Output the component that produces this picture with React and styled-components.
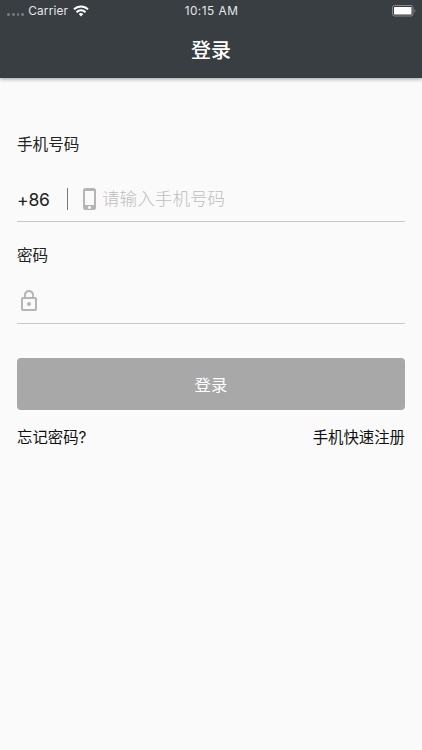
import { useState } from 'react'
import styled, { createGlobalStyle } from 'styled-components'
import { MdPhoneIphone, MdLockOutline } from 'react-icons/md'

const GlobalStyle = createGlobalStyle`
    *{
        box-sizing:border-box;
    }
    body{
        margin:0;
        background-color:#fafafa;
        font-family:Inter, "Noto Sans CJK SC", sans-serif;
    }
`
const Screen = styled.div`
    min-height:750px;
    background-color:#fafafa;
    color:#222;
`
const Header = styled.header`
    height:78px;
    background-color:#393e42;
    color:#fff;
    box-shadow:0 1px 4px rgba(0,0,0,0.4);
`
const StatusBar = styled.div`
    display:grid;
    grid-template-columns:1fr auto 1fr;
    align-items:center;
    height:20px;
    padding:0 6px 0 7px;
    font-size:11.8px;
    line-height:20px;
    letter-spacing:0.2px;
    color:#e6e8e9;
`
const Network = styled.div`
    display:flex;
    align-items:center;
    & svg{
        margin-left:5px;
    }
`
const Dots = styled.span`
    display:flex;
    gap:2px;
    padding-top:8px;
    margin-right:4px;
    & i{
        width:2.8px;
        height:2.6px;
        border-radius:50%;
        background-color:#74797d;
    }
`
const Time = styled.span`
    padding-top:1px;
    letter-spacing:0.5px;
`
const Battery = styled.svg`
    justify-self:end;
`
const Title = styled.h1`
    margin:0;
    padding-top:16px;
    text-align:center;
    font-size:20px;
    line-height:30px;
    font-weight:500;
`
const Form = styled.form`
    padding:55px 17px 0;
`
const Label = styled.label`
    display:block;
    font-size:15.6px;
    line-height:24px;
`
const Field = styled.div`
    display:flex;
    align-items:center;
    height:${props => props.$height};
    padding-top:${props => props.$offset};
    margin-bottom:${props => props.$gap};
    border-bottom:1px solid #c8c8c8;
    & svg{
        flex:none;
        color:#b5b5b5;
    }
`
const AreaCode = styled.span`
    width:50px;
    font-size:17.5px;
    letter-spacing:-0.2px;
`
const Divider = styled.span`
    width:1px;
    height:22px;
    margin-right:10px;
    background-color:#777;
`
const Input = styled.input`
    flex:1;
    min-width:0;
    padding:0;
    border:none;
    outline:none;
    background:none;
    font-family:inherit;
    font-size:17.6px;
    line-height:26px;
    color:#222;
    &::placeholder{
        color:#bebebe;
        font-weight:300;
        opacity:1;
    }
`
const Button = styled.button`
    display:block;
    width:100%;
    height:52px;
    padding:0;
    border:none;
    border-radius:4px;
    background-color:#a8a8a8;
    color:#fff;
    font-family:inherit;
    font-size:16.4px;
    cursor:pointer;
`
const Links = styled.div`
    display:flex;
    justify-content:space-between;
    padding-top:16px;
    font-size:15.4px;
    line-height:24px;
    & a{
        color:#111;
        text-decoration:none;
    }
`

function StatusIcons(){
    return (
        <StatusBar>
            <Network>
                <Dots><i/><i/><i/><i/></Dots>
                Carrier
                <svg width="16" height="12" viewBox="0 0 16 12" fill="none" stroke="#fff" strokeWidth="2">
                    <path d="M1 4.4a10 10 0 0 1 14 0"/>
                    <path d="M3.5 7.2a6.3 6.3 0 0 1 9 0"/>
                    <path d="M8 11.6 5.7 9.1a3.2 3.2 0 0 1 4.6 0z" fill="#fff" stroke="none"/>
                </svg>
            </Network>
            <Time>10:15 AM</Time>
            <Battery width="24" height="12" viewBox="0 0 24 12">
                <rect x="0.5" y="0.5" width="20.5" height="10.5" rx="2" fill="none" stroke="#858a8d"/>
                <rect x="2" y="2" width="17.5" height="7.5" rx="0.5" fill="#fff"/>
                <path d="M22.5 4v3.5c1.2-.5 1.2-3 0-3.5z" fill="#858a8d"/>
            </Battery>
        </StatusBar>
    )
}

function App(){

    const [phone, setPhone] = useState('')
    const [password, setPassword] = useState('')

    return (
        <Screen>
            <GlobalStyle/>
            <Header>
                <StatusIcons/>
                <Title>登录</Title>
            </Header>
            <Form onSubmit={e => e.preventDefault()}>
                <Label htmlFor="phone">手机号码</Label>
                <Field $height="65px" $offset="20px" $gap="22px">
                    <AreaCode>+86</AreaCode>
                    <Divider/>
                    <MdPhoneIphone size={24}/>
                    <Input id="phone" type="tel" placeholder="请输入手机号码" value={phone} onChange={e => setPhone(e.target.value)}/>
                </Field>
                <Label htmlFor="password">密码</Label>
                <Field $height="56px" $offset="10px" $gap="34px">
                    <MdLockOutline size={24}/>
                    <Input id="password" type="password" value={password} onChange={e => setPassword(e.target.value)}/>
                </Field>
                <Button type="submit">登录</Button>
                <Links>
                    <a href="#forgot">忘记密码?</a>
                    <a href="#register">手机快速注册</a>
                </Links>
            </Form>
        </Screen>
    )
}

export default App
